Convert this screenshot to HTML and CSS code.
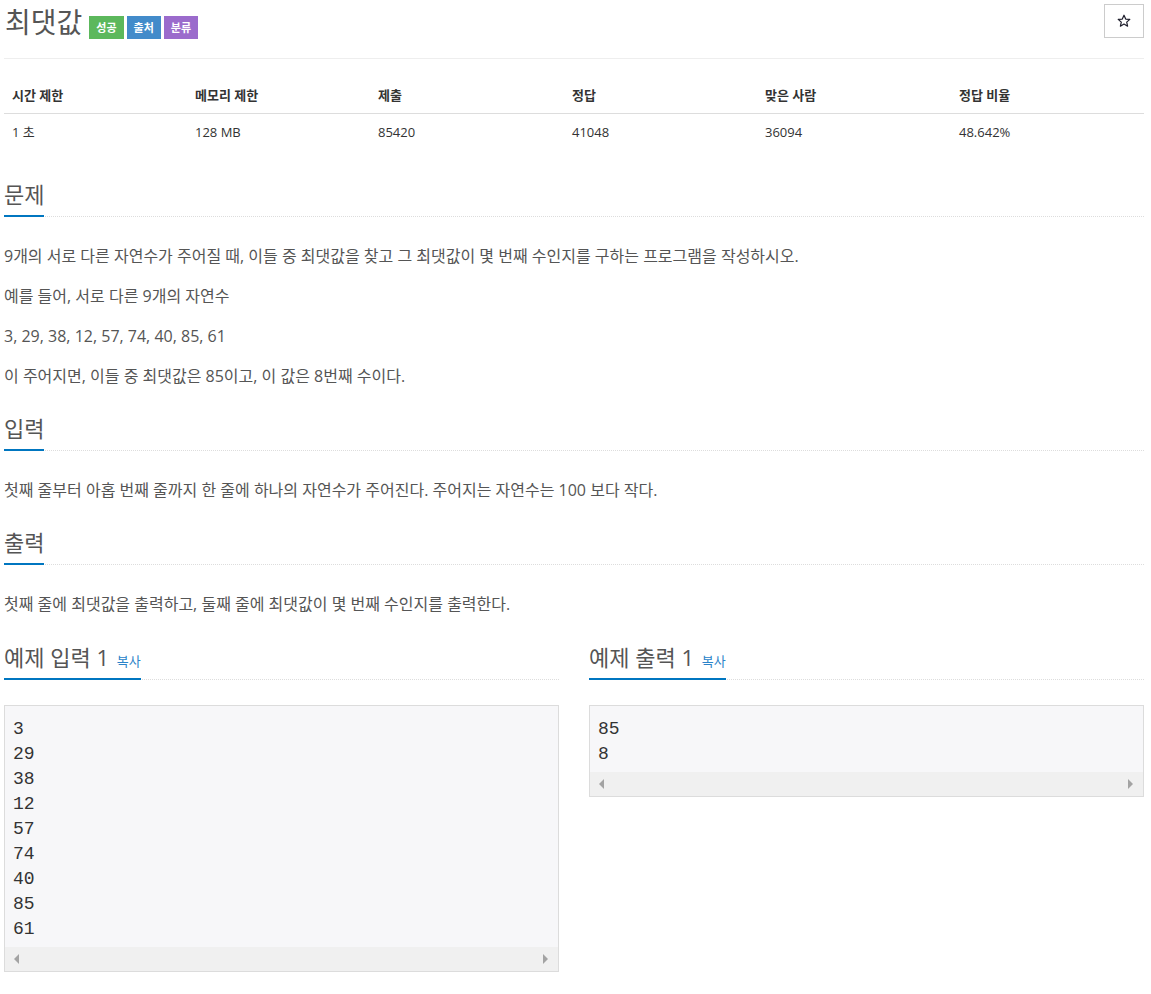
FILE: index.html
```html
<!DOCTYPE html>
<html lang="ko">
<head>
<meta charset="utf-8">
<title>최댓값</title>
<link rel="stylesheet" href="styles.css">
</head>
<body>
<div class="page">
  <div class="page-header">
    <h1 class="title">최댓값</h1>
    <div class="labels">
      <span class="label green">성공</span>
      <span class="label blue">출처</span>
      <span class="label purple">분류</span>
    </div>
    <button class="star" type="button" aria-label="즐겨찾기">
      <svg class="star-icon" width="14" height="14" viewBox="0 0 14 14"><path d="M7 1.2 8.7 5.1 12.8 5.4 9.7 8.1 10.6 12.2 7 10 3.4 12.2 4.3 8.1 1.2 5.4 5.3 5.1Z" fill="none" stroke="#1d1d2b" stroke-width="1.2" stroke-linejoin="round"/></svg>
    </button>
  </div>

  <table class="info">
    <thead>
      <tr><th>시간 제한</th><th>메모리 제한</th><th>제출</th><th>정답</th><th>맞은 사람</th><th>정답 비율</th></tr>
    </thead>
    <tbody>
      <tr><td>1 초</td><td>128 MB</td><td>85420</td><td>41048</td><td>36094</td><td>48.642%</td></tr>
    </tbody>
  </table>

  <section class="sec">
    <div class="headline"><h2>문제</h2></div>
    <p>9개의 서로 다른 자연수가 주어질 때, 이들 중 최댓값을 찾고 그 최댓값이 몇 번째 수인지를 구하는 프로그램을 작성하시오.</p>
    <p>예를 들어, 서로 다른 9개의 자연수</p>
    <p>3, 29, 38, 12, 57, 74, 40, 85, 61</p>
    <p>이 주어지면, 이들 중 최댓값은 85이고, 이 값은 8번째 수이다.</p>
  </section>

  <section class="sec">
    <div class="headline"><h2>입력</h2></div>
    <p>첫째 줄부터 아홉 번째 줄까지 한 줄에 하나의 자연수가 주어진다. 주어지는 자연수는 100 보다 작다.</p>
  </section>

  <section class="sec">
    <div class="headline"><h2>출력</h2></div>
    <p>첫째 줄에 최댓값을 출력하고, 둘째 줄에 최댓값이 몇 번째 수인지를 출력한다.</p>
  </section>

  <div class="samples">
    <section class="sample-col">
      <div class="headline"><h2>예제 입력 1 <a class="copy">복사</a></h2></div>
      <div class="sample">
<pre class="sample-text">3
29
38
12
57
74
40
85
61</pre>
        <div class="hscroll"><span class="arr arr-left"></span><span class="arr arr-right"></span></div>
      </div>
    </section>
    <section class="sample-col">
      <div class="headline"><h2>예제 출력 1 <a class="copy">복사</a></h2></div>
      <div class="sample">
<pre class="sample-text">85
8</pre>
        <div class="hscroll"><span class="arr arr-left"></span><span class="arr arr-right"></span></div>
      </div>
    </section>
  </div>
</div>
</body>
</html>
```

FILE: styles.css
```css
body {
  margin: 0;
  background: #fff;
  font-family: "Open Sans", "Noto Sans CJK KR", sans-serif;
  color: #555;
  font-feature-settings: "palt";
}

.page {
  width: 1140px;
  margin-left: 4px;
  display: flex;
  flex-direction: column;
}

.page-header {
  display: flex;
  align-items: flex-start;
  height: 58px;
  border-bottom: 1px solid #eee;
}

.title {
  margin: 5px 0 0 1px;
  font-size: 28px;
  line-height: 34px;
  font-weight: 400;
  color: #555;
}

.labels {
  display: flex;
  gap: 3px;
  margin: 16px 0 0 7px;
}

.label {
  height: 23px;
  line-height: 23px;
  padding: 0 7px;
  font-size: 11px;
  font-weight: 700;
  color: #fff;
}

.green { background: #5cb85c; }
.blue { background: #428bca; }
.purple { background: #9b6bcc; }

.star {
  margin: 4px 0 0 auto;
  width: 40px;
  height: 34px;
  padding: 0;
  border: 1px solid #ccc;
  background: #fff;
  display: flex;
  align-items: center;
  justify-content: center;
}

.star-icon {
  display: block;
}

.info {
  width: 100%;
  border-collapse: collapse;
  margin: 18px 0 17px;
  font-size: 13px;
  color: #333;
}

.info th,
.info td {
  text-align: left;
  padding: 8px;
  line-height: 20px;
}

.info th {
  font-weight: 700;
  border-bottom: 1px solid #ddd;
}

.info th:nth-child(1), .info th:nth-child(2) { width: 167px; }
.info th:nth-child(3), .info th:nth-child(5) { width: 178px; }
.info th:nth-child(4) { width: 177px; }

.sec,
.sample-col {
  display: flex;
  flex-direction: column;
}

.headline {
  display: flex;
  border-bottom: 1px dotted #ddd;
  margin: 15px 0 24px;
}

.headline h2 {
  margin: 0 0 -1px;
  padding-bottom: 9px;
  border-bottom: 2px solid #0076c0;
  font-size: 22px;
  line-height: 24px;
  font-weight: 400;
  color: #555;
}

.sec p {
  margin: 0 0 10px;
  font-size: 16px;
  line-height: 30px;
}

.samples {
  display: grid;
  grid-template-columns: 1fr 1fr;
  gap: 30px;
}

.samples .headline {
  margin: 16px 0 25px;
}

.copy {
  margin-left: 2px;
  font-size: 13px;
  line-height: 1;
  color: #2b83c9;
  cursor: pointer;
}

.sample {
  border: 1px solid #dcdcdc;
  background: #f7f7f9;
}

.sample-text {
  margin: 0;
  padding: 11px 8px 5px;
  font-family: "Liberation Mono", monospace;
  font-size: 18px;
  line-height: 25px;
  color: #333;
}

.hscroll {
  height: 24px;
  background: #f0f0f0;
  display: flex;
  align-items: center;
  justify-content: space-between;
  padding: 0 10px 0 9px;
}

.arr {
  width: 0;
  height: 0;
  border-top: 5px solid transparent;
  border-bottom: 5px solid transparent;
}

.arr-left { border-right: 5px solid #a3a3a3; }
.arr-right { border-left: 5px solid #a3a3a3; }
```
